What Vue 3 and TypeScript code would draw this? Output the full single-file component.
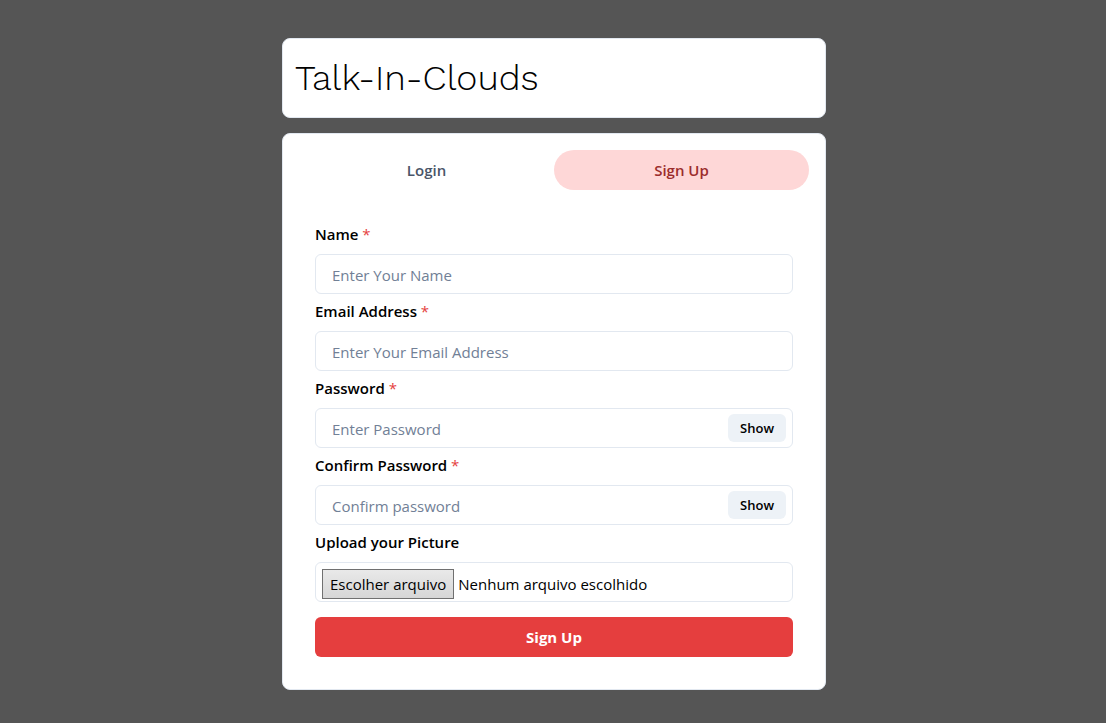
<script setup lang="ts">
import { reactive, ref } from 'vue'

interface Field {
  id: string
  label: string
  placeholder: string
  type: 'text' | 'email' | 'password'
}

const fields: Field[] = [
  { id: 'name', label: 'Name', placeholder: 'Enter Your Name', type: 'text' },
  { id: 'email', label: 'Email Address', placeholder: 'Enter Your Email Address', type: 'email' },
  { id: 'password', label: 'Password', placeholder: 'Enter Password', type: 'password' },
  { id: 'confirm', label: 'Confirm Password', placeholder: 'Confirm password', type: 'password' },
]

const tabs = ['Login', 'Sign Up']
const activeTab = ref('Sign Up')
const values = reactive<Record<string, string>>({ name: '', email: '', password: '', confirm: '' })
const shown = reactive<Record<string, boolean>>({})
const fileName = ref('Nenhum arquivo escolhido')

function onFile(event: Event) {
  const file = (event.target as HTMLInputElement).files?.[0]
  fileName.value = file ? file.name : 'Nenhum arquivo escolhido'
}
</script>

<template>
  <main class="page">
    <div class="container">
      <header class="card brand">
        <h1>Talk-In-Clouds</h1>
      </header>

      <section class="card panel">
        <div class="tabs" role="tablist">
          <button
            v-for="tab in tabs"
            :key="tab"
            type="button"
            role="tab"
            class="tab"
            :class="{ active: tab === activeTab }"
            :aria-selected="tab === activeTab"
            @click="activeTab = tab"
          >
            {{ tab }}
          </button>
        </div>

        <form class="form" @submit.prevent>
          <div v-for="field in fields" :key="field.id" class="field">
            <label :for="field.id">{{ field.label }} <span class="required">*</span></label>
            <div class="control">
              <input
                :id="field.id"
                v-model="values[field.id]"
                :type="shown[field.id] ? 'text' : field.type"
                :placeholder="field.placeholder"
              />
              <button
                v-if="field.type === 'password'"
                type="button"
                class="show"
                @click="shown[field.id] = !shown[field.id]"
              >
                {{ shown[field.id] ? 'Hide' : 'Show' }}
              </button>
            </div>
          </div>

          <div class="field">
            <label for="picture">Upload your Picture</label>
            <div class="control upload">
              <span class="choose">Escolher arquivo</span>
              <span class="file-name">{{ fileName }}</span>
              <input id="picture" class="file" type="file" accept="image/*" @change="onFile" />
            </div>
          </div>

          <button type="submit" class="submit">Sign Up</button>
        </form>
      </section>
    </div>
  </main>
</template>

<style>
body {
  margin: 0;
  background: #555;
}
</style>

<style scoped>
.page,
.page * {
  box-sizing: border-box;
}

.page {
  min-height: 100vh;
  padding: 38px 14px 33px 16px;
  font-family: "Segoe UI", "Open Sans", "Noto Sans", sans-serif;
  font-size: 15px;
  line-height: 24px;
  color: #000;
}

button,
input {
  font: inherit;
  color: inherit;
}

button {
  border: 0;
  cursor: pointer;
}

.container {
  display: flex;
  flex-direction: column;
  gap: 15px;
  max-width: 544px;
  margin: 0 auto;
}

.card {
  background: #fff;
  border: 1px solid #e2e8f0;
  border-radius: 8px;
}

.brand {
  padding: 12px;
}

h1 {
  margin: 0;
  font-family: "Work Sans", Inter, sans-serif;
  font-size: 36px;
  font-weight: 300;
  line-height: 54px;
}

.panel {
  padding: 16px;
}

.tabs {
  display: flex;
}

.tab {
  flex: 1;
  height: 40px;
  padding: 0 16px;
  border-radius: 20px;
  background: transparent;
  color: #4a5568;
  font-weight: 600;
}

.tab.active {
  background: #fed7d7;
  color: #9b2c2c;
}

.form {
  display: flex;
  flex-direction: column;
  gap: 5px;
  padding: 32px 16px 16px;
}

.field {
  display: flex;
  flex-direction: column;
  gap: 8px;
}

.field label {
  font-weight: 600;
}

.required {
  color: #e53e3e;
  font-weight: 400;
}

.control {
  display: flex;
  align-items: center;
  position: relative;
  height: 40px;
  border: 1px solid #e2e8f0;
  border-radius: 6px;
}

.control input {
  flex: 1;
  min-width: 0;
  height: 100%;
  padding: 2px 16px 0;
  border: 0;
  outline: 0;
  background: transparent;
}

.control:focus-within {
  border-color: #3182ce;
}

.control input::placeholder {
  color: #718096;
  opacity: 1;
}

.show {
  height: 28px;
  margin-right: 6px;
  padding: 0 12px;
  border-radius: 6px;
  background: #edf2f7;
  font-size: 13px;
  font-weight: 600;
}

.upload {
  gap: 4px;
  padding: 4px 6px 0;
}

.choose {
  height: 30px;
  padding: 2px 7px;
  border: 1px solid #707070;
  background: linear-gradient(#e9e9e9, #d6d6d6);
  white-space: nowrap;
}

.control .file {
  position: absolute;
  inset: 0;
  width: 100%;
  opacity: 0;
  cursor: pointer;
}

.submit {
  height: 40px;
  margin-top: 10px;
  border-radius: 6px;
  background: #e53e3e;
  color: #fff;
  font-weight: 700;
}
</style>
